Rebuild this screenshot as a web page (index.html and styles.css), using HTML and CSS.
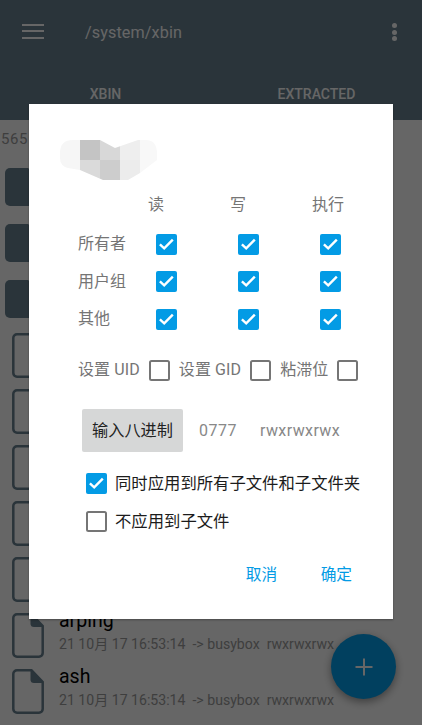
FILE: index.html
```html
<!DOCTYPE html>
<html lang="zh-CN">
<head>
<meta charset="utf-8">
<title>/system/xbin</title>
<link rel="stylesheet" href="styles.css">
</head>
<body>
<svg class="defs" width="0" height="0" aria-hidden="true">
  <symbol id="check" viewBox="0 0 21 21">
    <rect width="21" height="21" rx="2" fill="#039be5"/>
    <path d="M3.9 10.4l4.3 4 8.6-8.8" fill="none" stroke="#fff" stroke-width="2.4"/>
  </symbol>
  <symbol id="file" viewBox="0 0 32 45">
    <path d="M5 1.3h14.5L30.7 13v27a3.7 3.7 0 0 1-3.7 3.7H5A3.7 3.7 0 0 1 1.3 40V5A3.7 3.7 0 0 1 5 1.3z" fill="none" stroke="#698291" stroke-width="2.5"/>
    <path d="M18.5 1.3L30.7 14H22a3.5 3.5 0 0 1-3.5-3.5z" fill="#698291"/>
  </symbol>
  <symbol id="folder" viewBox="0 0 38 38">
    <path d="M5 0h18l15 13v20a5 5 0 0 1-5 5H5a5 5 0 0 1-5-5V5a5 5 0 0 1 5-5z" fill="#698291"/>
  </symbol>
</svg>

<header class="appbar">
  <div class="toolbar">
    <div class="menu"><span></span><span></span><span></span></div>
    <div class="path">/system/xbin</div>
    <div class="more"><span></span><span></span><span></span></div>
  </div>
  <nav class="tabs">
    <div class="tab">XBIN</div>
    <div class="tab">EXTRACTED</div>
  </nav>
</header>

<main class="list">
  <div class="count">565</div>
  <div class="row"><svg class="ic-folder"><use href="#folder"/></svg></div>
  <div class="row"><svg class="ic-folder"><use href="#folder"/></svg></div>
  <div class="row"><svg class="ic-folder"><use href="#folder"/></svg></div>
  <div class="row"><svg class="ic-file"><use href="#file"/></svg></div>
  <div class="row"><svg class="ic-file"><use href="#file"/></svg></div>
  <div class="row"><svg class="ic-file"><use href="#file"/></svg></div>
  <div class="row"><svg class="ic-file"><use href="#file"/></svg></div>
  <div class="row"><svg class="ic-file"><use href="#file"/></svg></div>
  <div class="row"><svg class="ic-file"><use href="#file"/></svg>
    <div class="info"><div class="name">arping</div><div class="meta">21 10月 17 16:53:14&nbsp; -&gt; busybox&nbsp; rwxrwxrwx</div></div></div>
  <div class="row"><svg class="ic-file"><use href="#file"/></svg>
    <div class="info"><div class="name">ash</div><div class="meta">21 10月 17 16:53:14&nbsp; -&gt; busybox&nbsp; rwxrwxrwx</div></div></div>
  <div class="row"><svg class="ic-file"><use href="#file"/></svg>
    <div class="info"><div class="name">awk</div></div></div>
</main>

<button class="fab" type="button">
  <svg width="24" height="24" viewBox="0 0 24 24"><path d="M12 3.5v17M3.5 12h17" stroke="#fff" stroke-width="2" fill="none"/></svg>
</button>

<div class="scrim"></div>

<section class="dialog">
  <svg class="blur" width="97" height="40" viewBox="0 0 97 40" aria-hidden="true">
    <defs><clipPath id="blob"><path d="M0 13Q0 0 13 0H40L55 8 78 0H86Q97 0 97 14V20L80 33 68 40H43L20 30 8 28Q0 26 0 18z"/></clipPath></defs>
    <g clip-path="url(#blob)">
      <rect x="0" y="0" width="20" height="40" fill="#f6f6f6"/>
      <rect x="20" y="0" width="20" height="20" fill="#c4c4c4"/>
      <rect x="40" y="0" width="20" height="20" fill="#d8d8d8"/>
      <rect x="60" y="0" width="20" height="20" fill="#eeeeee"/>
      <rect x="80" y="0" width="17" height="40" fill="#f8f8f8"/>
      <rect x="20" y="20" width="20" height="20" fill="#dadada"/>
      <rect x="40" y="20" width="20" height="20" fill="#cdcdcd"/>
      <rect x="60" y="20" width="20" height="20" fill="#ececec"/>
    </g>
  </svg>

  <div class="perms">
    <span></span><span class="col">读</span><span class="col">写</span><span class="col">执行</span>
    <span class="lbl">所有者</span>
    <svg class="box"><use href="#check"/></svg><svg class="box"><use href="#check"/></svg><svg class="box"><use href="#check"/></svg>
    <span class="lbl">用户组</span>
    <svg class="box"><use href="#check"/></svg><svg class="box"><use href="#check"/></svg><svg class="box"><use href="#check"/></svg>
    <span class="lbl">其他</span>
    <svg class="box"><use href="#check"/></svg><svg class="box"><use href="#check"/></svg><svg class="box"><use href="#check"/></svg>
  </div>

  <div class="special">
    <span class="lbl">设置 UID</span><i class="empty"></i>
    <span class="lbl">设置 GID</span><i class="empty"></i>
    <span class="lbl">粘滞位</span><i class="empty"></i>
  </div>

  <div class="octal">
    <button class="octal-btn" type="button">输入八进制</button>
    <span class="num">0777</span>
    <span class="sym">rwxrwxrwx</span>
  </div>

  <div class="opt"><svg class="box"><use href="#check"/></svg><span>同时应用到所有子文件和子文件夹</span></div>
  <div class="opt second"><i class="empty"></i><span>不应用到子文件</span></div>

  <div class="actions">
    <button class="act" type="button">取消</button>
    <button class="act" type="button">确定</button>
  </div>
</section>
</body>
</html>
```

FILE: styles.css
```css
* { box-sizing: border-box; }
html, body { margin: 0; padding: 0; }
body {
  width: 422px;
  height: 725px;
  overflow: hidden;
  position: relative;
  background: #fff;
  font-family: Roboto, "Noto Sans CJK SC", sans-serif;
}
.defs { position: absolute; }

.appbar { height: 120px; background: #698291; color: #fff; }
.toolbar { height: 64px; display: flex; align-items: center; }
.menu { width: 22px; margin: 0 0 2px 22px; display: flex; flex-direction: column; gap: 4.5px; }
.menu span { display: block; height: 2px; background: #fff; }
.path { margin-left: 41px; font-size: 16.2px; letter-spacing: .1px; flex: 1; }
.more { width: 5px; margin-right: 25px; display: flex; flex-direction: column; gap: 1.5px; }
.more span { width: 5px; height: 5px; border-radius: 50%; background: #fff; }
.tabs { display: flex; height: 56px; }
.tab { flex: 1; text-align: center; font-size: 14px; font-weight: 500; line-height: 18px; padding-top: 21px; }

.list { height: 605px; overflow: hidden; }
.count { height: 39px; line-height: 39px; font-size: 15px; padding-left: 1px; color: #9c9c9c; letter-spacing: .6px; }
.row { height: 56px; display: flex; align-items: center; position: relative; }
.ic-folder { width: 38px; height: 38px; margin-left: 5px; flex: none; }
.ic-file { width: 32px; height: 45px; margin-left: 12px; flex: none; }
.info { margin-left: 15px; margin-top: -8px; }
.name { font-size: 19.5px; line-height: 24px; color: #000; }
.meta { font-size: 14.1px; line-height: 20px; margin-top: 1px; color: #9c9c9c; white-space: nowrap; }
.row:last-child .info { margin-top: 0; }

.fab {
  position: absolute; left: 331px; top: 634px;
  width: 65px; height: 65px; border: 0; border-radius: 50%;
  background: #03a0ee;
  box-shadow: 0 3px 8px rgba(0,0,0,.4);
  display: flex; align-items: center; justify-content: center; padding: 0;
}
.scrim { position: absolute; inset: 0; background: rgba(0,0,0,.6); }

.dialog {
  position: absolute; left: 29px; top: 104px;
  width: 364px; height: 515px;
  background: #fff;
  box-shadow: 0 1px 2px rgba(0,0,0,.3);
  padding-top: 36px;
  color: #757575;
}
.blur { display: block; margin-left: 31px; }
.perms {
  display: grid;
  grid-template-columns: 70px 82px 82px 82px;
  grid-template-rows: 32.5px 37.5px 37.5px 37.5px;
  margin: 13px 0 0 49px;
  align-items: center;
  font-size: 16px;
}
.perms .box { margin-left: 8px; }
.col { line-height: 24px; align-self: start; }
.lbl { font-size: 16px; line-height: 24px; }
.box { width: 21px; height: 21px; display: block; flex: none; }
.empty {
  display: block; width: 21px; height: 21px; flex: none;
  border: 2.5px solid #757575; border-radius: 2.5px;
}
.special { display: flex; align-items: center; margin: 20px 0 0 49px; height: 24px; }
.special .lbl { letter-spacing: .1px; }
.special .lbl:nth-of-type(n+2) { margin-left: 9px; }
.special .empty { margin-left: 9px; }
.octal { display: flex; align-items: center; margin: 26.5px 0 0 53px; height: 43px; font-size: 16px; color: #888; }
.octal-btn {
  width: 101px; height: 43px; border: 0; border-radius: 2px; padding: 0;
  background: #d6d7d7; color: #222;
  font: 16.2px/43px Roboto, "Noto Sans CJK SC", sans-serif;
}
.num { margin-left: 16px; letter-spacing: .5px; }
.sym { margin-left: 23px; letter-spacing: .4px; }
.opt { display: flex; align-items: center; gap: 8px; margin: 21px 0 0 57px; height: 21px; font-size: 16.35px; color: #1c1c1c; white-space: nowrap; }
.opt span { line-height: 19px; }
.opt.second { margin-top: 17px; }
.actions { display: flex; justify-content: flex-end; gap: 43.5px; margin: 31px 41px 0 0; }
.act { border: 0; background: none; padding: 0; color: #039be5; font: 15.7px/24px Roboto, "Noto Sans CJK SC", sans-serif; }
```
